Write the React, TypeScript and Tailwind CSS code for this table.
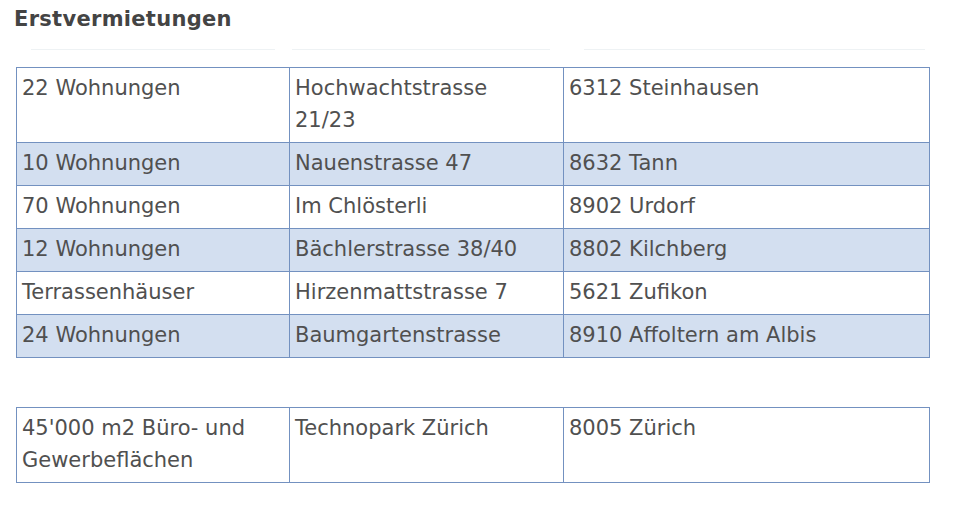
import { FC } from "react";

type Row = [string, string, string];

const firstRows: Row[] = [
  ["22 Wohnungen", "Hochwachtstrasse 21/23", "6312 Steinhausen"],
  ["10 Wohnungen", "Nauenstrasse 47", "8632 Tann"],
  ["70 Wohnungen", "Im Chlösterli", "8902 Urdorf"],
  ["12 Wohnungen", "Bächlerstrasse 38/40", "8802 Kilchberg"],
  ["Terrassenhäuser", "Hirzenmattstrasse 7", "5621 Zufikon"],
  ["24 Wohnungen", "Baumgartenstrasse", "8910 Affoltern am Albis"],
];

const secondRows: Row[] = [
  ["45'000 m2 Büro- und Gewerbeflächen", "Technopark Zürich", "8005 Zürich"],
];

const RentalTable: FC<{ rows: Row[] }> = ({ rows }) => (
  <table className="ml-[16px] w-[914px] table-fixed border-collapse">
    <colgroup>
      <col className="w-[273px]" />
      <col className="w-[274px]" />
      <col />
    </colgroup>
    <tbody>
      {rows.map((row, i) => (
        <tr key={i} className={i % 2 === 1 ? "bg-[#d3dff0]" : "bg-white"}>
          {row.map((cell, j) => (
            <td
              key={j}
              className="border border-[#7391c0] pl-[5px] pr-[14px] pt-[4px] pb-[6px] align-top text-[21px] leading-[32px] text-[#505050]"
            >
              {cell}
            </td>
          ))}
        </tr>
      ))}
    </tbody>
  </table>
);

export default function App() {
  return (
    <div
      className="h-[505px] w-[960px] bg-white"
      style={{ fontFamily: '"DejaVu Sans", Verdana, sans-serif' }}
    >
      <h2 className="ml-[14px] pt-[5px] text-[21px] leading-[28px] font-bold tracking-[0.3px] text-[#444444]">
        Erstvermietungen
      </h2>
      <div className="mt-[16px] flex h-px">
        <div className="ml-[31px] w-[244px] bg-[#eef2f4]" />
        <div className="ml-[17px] w-[258px] bg-[#eef2f4]" />
        <div className="ml-[34px] w-[341px] bg-[#eef2f4]" />
      </div>
      <div className="mt-[17px]">
        <RentalTable rows={firstRows} />
      </div>
      <div className="mt-[49px]">
        <RentalTable rows={secondRows} />
      </div>
    </div>
  );
}
